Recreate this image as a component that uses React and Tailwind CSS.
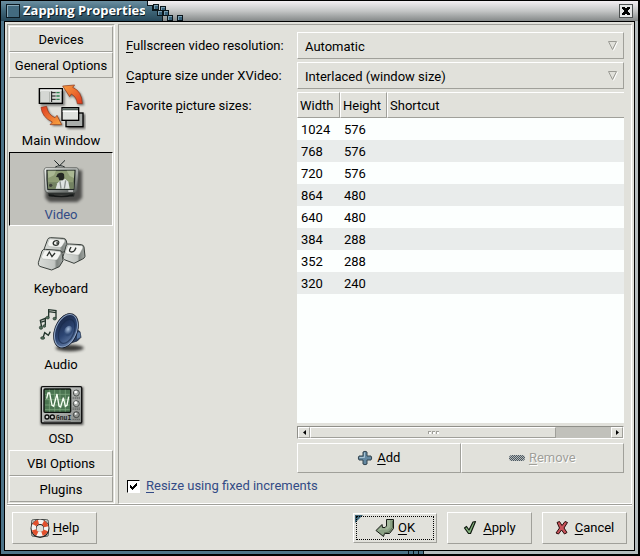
import { useState } from "react";

const raised = "border border-t-white border-l-white border-r-[#a0a09a] border-b-[#a0a09a]";
const sunken = "border border-t-[#a0a09a] border-l-[#a0a09a] border-r-white border-b-white";

function Key({ children }) {
  return <span className="underline underline-offset-2 decoration-1">{children}</span>;
}

function MainWindowIcon() {
  return (
    <svg width="50" height="48" viewBox="105 21 150 144" aria-hidden="true">
      <defs>
        <linearGradient id="mw-up" x1="0" y1="0" x2="1" y2="1">
          <stop offset="0" stopColor="#f8a040" />
          <stop offset="1" stopColor="#e03a20" />
        </linearGradient>
        <linearGradient id="mw-down" x1="0" y1="0" x2="1" y2="1">
          <stop offset="0" stopColor="#e03a20" />
          <stop offset="1" stopColor="#f8a840" />
        </linearGradient>
        <filter id="mw-blur" x="-20%" y="-20%" width="140%" height="140%">
          <feGaussianBlur stdDeviation="3" />
        </filter>
      </defs>
      <g fill="#000" opacity=".5" filter="url(#mw-blur)">
        <rect x="119" y="43" width="72" height="46" />
        <path d="M190 33 222 31 217 39Q245 45 250 88H232Q228 66 211 60L208 68Z" />
        <path d="M124 98 140 94Q144 118 165 126L171 120 187 150H153L158 142Q128 128 124 98Z" />
        <rect x="199" y="114" width="54" height="45" />
      </g>
      <rect x="115" y="38" width="69" height="44" fill="#d5d8d4" stroke="#000" strokeWidth="4" />
      <path d="M118 42H182" stroke="#fff" strokeWidth="3" />
      <path d="M120 48v30M126 48v30M132 48v30M138 48v30M144 48v30" stroke="#6d726e" strokeWidth="2" />
      <path d="M123 48v30M129 48v30M135 48v30M141 48v30" stroke="#f6f8f5" strokeWidth="3" />
      <path d="M152 46v32M152 50h12M152 60h12M152 70h12" stroke="#111" strokeWidth="3" fill="none" />
      <path d="M166 50h10M166 60h10M166 70h10" stroke="#2d8450" strokeWidth="4" />
      <path d="M185 30 221 27 215 34Q243 46 244 83H229Q227 63 211 54L206 62Z" fill="url(#mw-up)" stroke="#8b3418" strokeWidth="2" />
      <path d="M120 94 137 91Q140 116 162 125L168 118 182 146H147L154 138Q123 124 120 94Z" fill="url(#mw-down)" stroke="#8b3418" strokeWidth="2" />
      <rect x="195" y="111" width="51" height="41" fill="#a9adaa" stroke="#000" strokeWidth="4" />
      <rect x="183" y="95" width="50" height="38" fill="#e0e3df" stroke="#000" strokeWidth="4" />
      <path d="M185 100H231" stroke="#53635c" strokeWidth="6" />
      <path d="M185 106H231" stroke="#fff" strokeWidth="4" />
    </svg>
  );
}

function VideoIcon() {
  return (
    <svg width="50" height="48" viewBox="108 243 150 144" aria-hidden="true">
      <defs>
        <linearGradient id="tv-body" x1="0" y1="0" x2="1" y2="1">
          <stop offset="0" stopColor="#eceeea" />
          <stop offset=".6" stopColor="#a0a5a2" />
          <stop offset="1" stopColor="#4c504e" />
        </linearGradient>
        <filter id="tv-blur" x="-20%" y="-20%" width="140%" height="140%">
          <feGaussianBlur stdDeviation="5" />
        </filter>
      </defs>
      <path d="M138 283H246V366L232 378H148L136 366Z" fill="#000" opacity=".6" filter="url(#tv-blur)" />
      <path d="M163 253 179 269 195 253M165 274Q180 264 195 274" fill="none" stroke="#1c2424" strokeWidth="3" />
      <path d="M142 346H226L222 362H212L208 356H162L158 362H148Z" fill="#2a2e2c" />
      <path d="M138 275H230Q236 276 236 284L232 342Q231 349 224 350H144Q136 349 135 342L132 284Q132 276 138 275Z" fill="url(#tv-body)" stroke="#4d524f" strokeWidth="2" />
      <path d="M139 281H227Q226 315 223 342H142Q138 312 139 281Z" fill="#232a27" />
      <path d="M143 284H223L220 338H145Q142 310 143 284Z" fill="#8d9c74" />
      <path d="M143 284H168L162 298 145 306ZM200 284H223L222 306 209 300Z" fill="#aab893" />
      <path d="M145 319H221V338H146Z" fill="#738262" />
      <circle cx="152" cy="328" r="5" fill="#3f413b" />
      <path d="M167 338 172 322 180 314 196 309 205 317 209 338Z" fill="#dfe3e2" />
      <path d="M180 316 183 338M197 313 193 338" fill="none" stroke="#8b918e" strokeWidth="4" />
      <path d="M168 303 173 293Q185 287 192 294L193 305 189 313H178L175 304Z" fill="#232722" />
      <path d="M145 345H222" stroke="#5b605d" strokeWidth="2" />
      <path d="M205 345H219" stroke="#fff" strokeWidth="3" />
      <path d="M146 357Q185 366 220 357" stroke="#141716" strokeWidth="4" fill="none" />
    </svg>
  );
}

function KeyboardIcon() {
  return (
    <svg width="50" height="48" viewBox="108 18 150 144" aria-hidden="true">
      <defs>
        <linearGradient id="key-side" x1="0" y1="0" x2="1" y2="0">
          <stop offset="0" stopColor="#d9dcd8" />
          <stop offset=".65" stopColor="#c2c6c2" />
          <stop offset=".75" stopColor="#7f8581" />
          <stop offset="1" stopColor="#a4a9a5" />
        </linearGradient>
      </defs>
      <g stroke="#3a403c" strokeWidth="3" strokeLinejoin="round">
        <path d="M143 43Q145 38 152 38L190 40Q198 41 199 48L204 70 196 80 165 86 131 76Z" fill="url(#key-side)" />
        <path d="M199 60Q202 56 208 57L244 59Q251 60 252 66L255 94Q254 99 248 102L222 115 193 104Q188 101 189 95Z" fill="url(#key-side)" />
        <path d="M126 78Q129 72 136 73L178 76Q185 77 186 83L189 107 178 125 155 135 119 124Q114 120 115 113Z" fill="url(#key-side)" />
      </g>
      <g fill="#f3f4f1" stroke="#8b918d" strokeWidth="1">
        <path d="M148 42 190 43Q197 45 194 51L186 64Q183 68 177 67L150 65Q141 63 143 56Z" />
        <path d="M205 60 245 62Q251 64 248 70L239 87Q236 91 231 90L201 87Q194 85 197 78Z" />
        <path d="M134 76 178 79Q184 81 182 86L173 102Q170 106 165 105L129 102Q123 100 125 94Z" />
      </g>
      <g fill="none" stroke="#2b302c" strokeWidth="4">
        <path d="M177 50Q171 45 164 48Q157 53 161 59Q168 63 174 59L176 54H169" />
        <path d="M213 66 209 74Q207 81 215 81Q222 81 224 76L228 68" />
        <path d="M141 93 148 81 156 95 165 84" />
      </g>
    </svg>
  );
}

function AudioIcon() {
  return (
    <svg width="50" height="48" viewBox="108 246 150 144" aria-hidden="true">
      <defs>
        <linearGradient id="au-cone" x1="0" y1="0" x2="1" y2="1">
          <stop offset="0" stopColor="#16213c" />
          <stop offset=".55" stopColor="#2c4573" />
          <stop offset="1" stopColor="#7993ba" />
        </linearGradient>
        <radialGradient id="au-cap" cx=".4" cy=".35">
          <stop offset="0" stopColor="#a9bfdc" />
          <stop offset="1" stopColor="#304a76" />
        </radialGradient>
        <filter id="au-blur" x="-20%" y="-40%" width="140%" height="180%">
          <feGaussianBlur stdDeviation="5" />
        </filter>
      </defs>
      <ellipse cx="209" cy="369" rx="42" ry="10" fill="#000" opacity=".75" filter="url(#au-blur)" />
      <path d="M214 302 240 320 243 337 232 348 206 356Z" fill="#2c4062" stroke="#121d31" strokeWidth="2" />
      <path d="M231 320 241 323 241 337 231 342Z" fill="#5978a5" />
      <ellipse cx="198" cy="317" rx="34" ry="54" transform="rotate(22 198 317)" fill="#152037" stroke="#0d1426" strokeWidth="2" />
      <ellipse cx="198" cy="317" rx="31" ry="51" transform="rotate(22 198 317)" fill="url(#au-cone)" stroke="#8fa6c6" strokeWidth="3" />
      <ellipse cx="200" cy="319" rx="22" ry="38" transform="rotate(22 200 319)" fill="none" stroke="#18294a" strokeWidth="4" opacity=".6" />
      <ellipse cx="205" cy="318" rx="12" ry="16" transform="rotate(22 205 318)" fill="url(#au-cap)" />
      <g stroke="#24352c" strokeWidth="4" fill="none">
        <path d="M146 277V254L168 257V280M146 260 168 263" />
        <path d="M125 306 121 286 136 280 136 300M122 292 137 287" />
        <path d="M129 339 134 323 145 331 151 320" />
      </g>
      <g fill="#4e6c57" stroke="#24352c" strokeWidth="2">
        <ellipse cx="143" cy="278" rx="5" ry="4" />
        <ellipse cx="164" cy="281" rx="5" ry="4" />
        <ellipse cx="123" cy="308" rx="5" ry="5" />
        <ellipse cx="133" cy="303" rx="4" ry="4" />
        <ellipse cx="128" cy="339" rx="6" ry="4" />
      </g>
    </svg>
  );
}

function OsdIcon() {
  return (
    <svg width="50" height="48" viewBox="108 18 150 144" aria-hidden="true">
      <defs>
        <linearGradient id="osd-body" x1="0" y1="0" x2="1" y2="1">
          <stop offset="0" stopColor="#d9dbd9" />
          <stop offset="1" stopColor="#858986" />
        </linearGradient>
        <filter id="osd-blur" x="-20%" y="-20%" width="140%" height="140%">
          <feGaussianBlur stdDeviation="3" />
        </filter>
      </defs>
      <rect x="122" y="36" width="128" height="114" fill="#000" opacity=".6" filter="url(#osd-blur)" />
      <rect x="124" y="35" width="121" height="109" rx="4" fill="url(#osd-body)" stroke="#111" strokeWidth="4" />
      <rect x="132" y="42" width="80" height="70" rx="3" fill="#4a7450" stroke="#0b100c" strokeWidth="4" />
      <path d="M135 58H209M135 74H209M135 90H209M135 104H209M148 44V110M164 44V110M180 44V110M196 44V110" stroke="#83ad84" strokeWidth="2" />
      <path d="M140 71 144 54 149 54 156 91 161 94 171 57 177 93 182 96 190 68 196 94 201 91 206 65" fill="none" stroke="#f7fff4" strokeWidth="4" />
      <g stroke="#202321" strokeWidth="2">
        <circle cx="229" cy="54" r="9" fill="#aeb2af" />
        <circle cx="229" cy="86" r="9" fill="#aeb2af" />
        <circle cx="229" cy="119" r="9" fill="#8e928f" />
      </g>
      <g fill="#fff">
        <circle cx="227" cy="51" r="4" />
        <circle cx="227" cy="83" r="4" />
        <circle cx="227" cy="116" r="3" />
      </g>
      <path d="M218 67H241M218 71H241M218 99H241M218 103H241M218 133H241" stroke="#262927" strokeWidth="2" strokeDasharray="3 3" />
      <g fill="#cfd1cf" stroke="#0d0e0d" strokeWidth="4">
        <circle cx="141" cy="126" r="6" />
        <circle cx="157" cy="126" r="6" />
      </g>
      <text x="168" y="134" fontSize="19" fontWeight="700" fill="#1a1c1b" fontFamily="Liberation Mono, monospace">GnuI</text>
      <path d="M132 140H212" stroke="#555" strokeWidth="2" />
    </svg>
  );
}

function HelpIcon() {
  return (
    <svg width="20" height="20" viewBox="0 0 20 20" aria-hidden="true">
      <path d="M2 2 5 1.500 15 1.500 18 2 18.500 5V15L18 18 15 18.500H5L2 18 1.500 15V5Z" fill="none" stroke="#555a57" strokeWidth="1" />
      <circle cx="10" cy="10.500" r="6.500" fill="none" stroke="#222" strokeWidth="6" />
      <circle cx="10" cy="10" r="6.300" fill="none" stroke="#f5f3f0" strokeWidth="4.500" />
      <circle cx="10" cy="10" r="6.300" fill="none" stroke="#e2502c" strokeWidth="4.500" strokeDasharray="5 4.900" strokeDashoffset="-2.500" />
    </svg>
  );
}

function AddIcon() {
  return (
    <svg width="16" height="16" viewBox="0 0 16 16" aria-hidden="true">
      <path d="M6 2Q8 .500 10 2V6H14Q15.500 8 14 10H10V14Q8 15.500 6 14V10H2Q.500 8 2 6H6Z" fill="#6388a1" stroke="#33444f" strokeWidth="1" strokeLinejoin="round" />
      <path d="M7.500 2.500V7.500H2.500" fill="none" stroke="#a9c4d4" />
    </svg>
  );
}

function RemoveIcon() {
  return (
    <svg width="16" height="16" viewBox="0 0 16 16" aria-hidden="true">
      <defs>
        <pattern id="stipple" width="2" height="2" patternUnits="userSpaceOnUse">
          <rect width="2" height="2" fill="#b4b9ba" />
          <path d="M0 0h1v1H0zM1 1h1v1H1z" fill="#4c5860" />
        </pattern>
      </defs>
      <rect x="0" y="5" width="16" height="6" rx="3" fill="url(#stipple)" />
    </svg>
  );
}

function OkIcon() {
  return (
    <svg width="20" height="20" viewBox="0 0 20 20" aria-hidden="true">
      <path d="M11.500 1.500H18.500V10.500L14.500 15.500H9.500L8.500 18.500 1 12.500 7 6.500 7.500 9.500H10L11.500 8Z" fill="#8aa184" stroke="#151a14" strokeWidth="1" strokeLinejoin="round" />
      <path d="M12 2H15V9L12.500 11.500H7L3 12.500 6.500 9V10.500H10.500L12 8.500Z" fill="#a3b89c" />
      <path d="M9 15 14 14 17.500 9.500V3" fill="none" stroke="#5c6e55" />
    </svg>
  );
}

function ApplyIcon() {
  return (
    <svg width="14" height="16" viewBox="0 0 14 16" aria-hidden="true">
      <path d="M1.500 8 3.500 6.500 6 10 10 2 12.500 1.500 7.500 13.500H5.500Z" fill="#86b57e" stroke="#101a10" strokeWidth="1.200" strokeLinejoin="round" />
    </svg>
  );
}

function CancelIcon() {
  return (
    <svg width="14" height="16" viewBox="0 0 14 16" aria-hidden="true">
      <path d="M2 2.500 4.500 1.500 7 5.500 10 1.500 12.500 2.500 9 8 12 12.500 9.500 14 6.500 10 3.500 14 1 13 4.500 8Z" fill="#c8535a" stroke="#2a0c0c" strokeWidth="1" strokeLinejoin="round" />
    </svg>
  );
}

function TitleBlocks() {
  const blocks = [[153, 4], [160, 6], [157, 10], [163, 10], [167, 15], [177, 15]];
  return (
    <svg width="40" height="20" viewBox="145 1 40 20" shapeRendering="crispEdges" aria-hidden="true">
      <defs>
        <linearGradient id="stairs" gradientUnits="userSpaceOnUse" x1="0" y1="1" x2="0" y2="21">
          <stop offset="0" stopColor="#6b8fa1" />
          <stop offset=".5" stopColor="#3f6679" />
          <stop offset="1" stopColor="#27485a" />
        </linearGradient>
      </defs>
      <path d="M145 1H147V5H152V10H157V15H162V21H145Z" fill="url(#stairs)" />
      <path d="M147.500 1V5.500H152.500V10.500H157.500V15.500H162.500V21" fill="none" stroke="#0a151b" />
      {blocks.map(([x, y]) => (
        <g key={`${x}-${y}`}>
          <rect x={x} y={y} width="6" height="6" fill="#0a151b" />
          <rect x={x + 1} y={y + 1} width="4" height="4" fill="#37617a" />
          <path d={`M${x + 1} ${y + 1.5}h4M${x + 1.5} ${y + 1}v4`} stroke="#7c9fb2" />
        </g>
      ))}
    </svg>
  );
}

function SideTab({ children }) {
  return (
    <button type="button" className={`h-[26px] shrink-0 pt-[2px] leading-[18px] ${raised}`}>
      {children}
    </button>
  );
}

function SideItem({ icon, label, selected, tall, onClick }) {
  return (
    <button
      type="button"
      aria-pressed={selected}
      onClick={onClick}
      className={`flex shrink-0 flex-col items-center justify-end gap-px border pb-px leading-[18px] ${tall ? "h-[76px]" : "h-[74px]"} ${
        selected ? "border-t-black border-l-black border-r-white border-b-white bg-[#c1c1bb] text-[#334b86]" : "border-transparent"
      }`}
    >
      {icon}
      <span>{label}</span>
    </button>
  );
}

function Combo({ id, options }) {
  return (
    <div className="relative">
      <select id={id} className={`block h-[27px] w-full appearance-none rounded-none bg-[#e1e1db] px-[7px] pt-[2px] outline-none ${raised}`}>
        {options.map((o) => (
          <option key={o}>{o}</option>
        ))}
      </select>
      <svg className="pointer-events-none absolute top-[9px] right-[6px]" width="10" height="10" viewBox="0 0 10 10" aria-hidden="true">
        <path d="M9.500 1 5.500 9.500" stroke="#fff" />
        <path d="M.5.500H8.500L4.500 8.500Z" fill="none" stroke="#9b9b95" />
      </svg>
    </div>
  );
}

function ActionButton({ icon, gap = "gap-[6px]", children }) {
  return (
    <button type="button" className={`flex h-8 w-[85px] items-center justify-center ${gap} ${raised}`}>
      {icon}
      <span>{children}</span>
    </button>
  );
}

const sizes = [
  [1024, 576],
  [768, 576],
  [720, 576],
  [864, 480],
  [640, 480],
  [384, 288],
  [352, 288],
  [320, 240],
];

const items = [
  { label: "Main Window", icon: <MainWindowIcon /> },
  { label: "Video", icon: <VideoIcon /> },
  { label: "Keyboard", icon: <KeyboardIcon /> },
  { label: "Audio", icon: <AudioIcon />, tall: true },
  { label: "OSD", icon: <OsdIcon /> },
];

export default function App() {
  const [page, setPage] = useState("Video");
  const [fixed, setFixed] = useState(true);

  return (
    <div className="flex min-h-screen flex-col border border-r-2 border-b-2 border-black bg-[#e1e1db] font-[Roboto,sans-serif] text-[13px] text-black">
      <header className="flex h-5 shrink-0 items-center bg-linear-to-b from-[#f4f0f4] via-[#c4c6c6] to-[#858989]">
        <div className="flex h-5 w-36 items-center gap-[3px] bg-linear-to-b from-[#6b8fa1] via-[#3f6679] to-[#27485a] pl-[5px]">
          <button type="button" aria-label="Window menu" className="size-[14px] shrink-0 border border-[#0c1a22] bg-[#436b80] shadow-[inset_1px_1px_#8aa9b8]" />
          <h1 className="font-['Open_Sans','Noto_Sans',sans-serif] text-[13px] font-bold whitespace-nowrap text-white [text-shadow:1px_1px_#0c1a22]">Zapping Properties</h1>
        </div>
        <TitleBlocks />
        <button type="button" aria-label="Close" className="mr-[5px] ml-auto flex size-[14px] items-center justify-center border border-[#4c5050] bg-[#e4e6e6]">
          <svg width="8" height="8" viewBox="0 0 8 8" shapeRendering="crispEdges" aria-hidden="true">
            <path d="M0 0h3v1h2V0h3v2H7v1H6v2h1v1h1v2H5V7H3v1H0V6h1V5h1V3H1V2H0z" fill="#000" />
          </svg>
        </button>
      </header>

      <div className="flex flex-1 border-r-[3px] border-l-[3px] border-r-[#b5bcbe] border-l-[#4c7388]">
        <main className="flex min-w-0 flex-1 flex-col border border-black">
          <div className="flex flex-1 gap-[3px] px-[2px] pt-[2px]">
            <nav aria-label="Categories" className={`flex w-[108px] shrink-0 flex-col p-px pb-0 ${sunken}`}>
              <SideTab>Devices</SideTab>
              <SideTab>General Options</SideTab>
              {items.map((it) => (
                <SideItem key={it.label} {...it} selected={page === it.label} onClick={() => setPage(it.label)} />
              ))}
              <SideTab>VBI Options</SideTab>
              <SideTab>Plugins</SideTab>
            </nav>

            <section className={`flex min-w-0 flex-1 flex-col px-[7px] pt-[7px] ${sunken}`}>
              <div className="grid flex-1 grid-cols-[171px_minmax(0,1fr)] grid-rows-[27px_27px_1fr] gap-y-[3px]">
                <label htmlFor="resolution" className="self-center">
                  <Key>F</Key>ullscreen video resolution:
                </label>
                <Combo id="resolution" options={["Automatic"]} />
                <label htmlFor="capture" className="self-center">
                  <Key>C</Key>apture size under XVideo:
                </label>
                <Combo id="capture" options={["Interlaced (window size)"]} />
                <span className="pt-1">
                  Favorite <Key>p</Key>icture sizes:
                </span>
                <div className="flex flex-col">
                  <div className="flex-1 bg-[#fcfffe]">
                    <table className="w-full table-fixed border-collapse text-left">
                      <thead>
                        <tr className="h-[26px] bg-[#e1e1db]">
                          <th className="w-[43px] p-0 font-normal"><div className={`h-[26px] pl-[2px] leading-[26px] ${raised}`}>Width</div></th>
                          <th className="w-[47px] p-0 font-normal"><div className={`h-[26px] pl-[2px] leading-[26px] ${raised}`}>Height</div></th>
                          <th className="p-0 font-normal"><div className="h-[26px] border-y border-l border-t-white border-b-[#a0a09a] border-l-white pl-[2px] leading-[26px]">Shortcut</div></th>
                        </tr>
                      </thead>
                      <tbody>
                        {sizes.map(([w, h]) => (
                          <tr key={`${w}x${h}`} className="h-[22px] even:bg-[#e9eceb]">
                            <td className="p-0 pt-[2px] pl-1 leading-5">{w}</td>
                            <td className="p-0 pt-[2px] pl-1 leading-5">{h}</td>
                            <td className="p-0" />
                          </tr>
                        ))}
                      </tbody>
                    </table>
                  </div>
                  <div className="mt-[3px] mb-1 flex h-[13px] border border-[#8f8f89] border-r-white border-b-white bg-[#c1c1bb]">
                    <button type="button" aria-label="Scroll left" className={`flex w-3 items-center justify-center bg-[#e1e1db] ${raised}`}>
                      <svg width="3" height="5" viewBox="0 0 3 5" aria-hidden="true"><path d="M3 0V5L0 2.500Z" /></svg>
                    </button>
                    <div className={`flex w-[246px] items-center justify-center gap-px bg-[#e1e1db] ${raised}`}>
                      <i className="size-[3px] border-t border-l border-[#a0a09a] bg-white" />
                      <i className="size-[3px] border-t border-l border-[#a0a09a] bg-white" />
                      <i className="size-[3px] border-t border-l border-[#a0a09a] bg-white" />
                    </div>
                    <button type="button" aria-label="Scroll right" className={`ml-auto flex w-3 items-center justify-center bg-[#e1e1db] ${raised}`}>
                      <svg width="3" height="5" viewBox="0 0 3 5" aria-hidden="true"><path d="M0 0V5L3 2.500Z" /></svg>
                    </button>
                  </div>
                  <div className="grid h-[30px] grid-cols-2">
                    <button type="button" className={`flex items-center justify-center gap-1 ${raised}`}>
                      <AddIcon />
                      <span><Key>A</Key>dd</span>
                    </button>
                    <button type="button" disabled className={`flex items-center justify-center gap-1 text-[#a0a09a] [text-shadow:1px_1px_white] ${raised}`}>
                      <RemoveIcon />
                      <span><Key>R</Key>emove</span>
                    </button>
                  </div>
                </div>
              </div>
              <label className="mb-1 flex h-[26px] items-center gap-[6px] pl-px text-[#334b86]">
                <input
                  type="checkbox"
                  checked={fixed}
                  onChange={(e) => setFixed(e.target.checked)}
                  className="peer size-[13px] appearance-none border border-t-black border-l-black border-r-white border-b-white bg-white"
                />
                <svg className="pointer-events-none absolute ml-[3px] hidden peer-checked:block" width="7" height="7" viewBox="0 0 7 7" shapeRendering="crispEdges" aria-hidden="true">
                  <path d="M0 2h1v1h1v1h1V3h1V2h1V1h1V0h1v3H6v1H5v1H4v1H3v1H2V6H1V5H0z" fill="#000" />
                </svg>
                <span><Key>R</Key>esize using fixed increments</span>
              </label>
            </section>
          </div>

          <footer className="mx-[2px] flex h-[46px] shrink-0 items-center border-t border-t-[#a0a09a] pr-[5px] pl-[5px] shadow-[inset_0_1px_white]">
            <ActionButton icon={<HelpIcon />} gap="gap-[3px]"><Key>H</Key>elp</ActionButton>
            <div className="ml-auto flex items-center gap-[10px]">
              <button type="button" className={`relative h-[30px] w-[84px] p-[2px] ${raised}`}>
                <svg className="absolute top-px left-px" width="8" height="8" viewBox="0 0 8 8" aria-hidden="true"><path d="M0 0H8L0 8Z" fill="#3f6679" /></svg>
                <span className="relative flex h-full items-center justify-center gap-[3px] border border-dotted border-black">
                  <OkIcon />
                  <span><Key>O</Key>K</span>
                </span>
              </button>
              <ActionButton icon={<ApplyIcon />}><Key>A</Key>pply</ActionButton>
              <ActionButton icon={<CancelIcon />}><Key>C</Key>ancel</ActionButton>
            </div>
          </footer>
        </main>
      </div>
      <div className="flex h-[3px] shrink-0 gap-px bg-[#0a151b]">
        <div className="flex-1 bg-[#4c7388]" />
        <div className="w-1 bg-[#4c7388]" />
        <div className="w-1 bg-[#4c7388]" />
        <div className="w-1 bg-[#4c7388]" />
        <div className="w-[214px] bg-[#b5bcbe]" />
      </div>
    </div>
  );
}
